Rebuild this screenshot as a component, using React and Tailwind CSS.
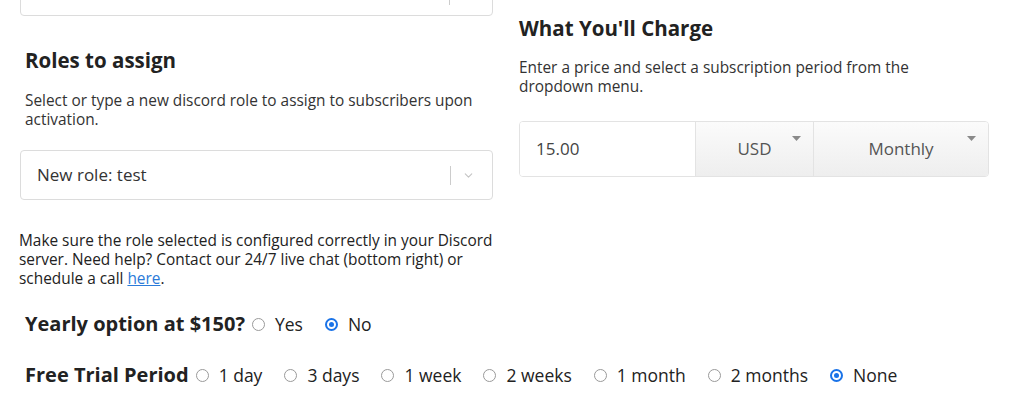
import { ChevronDown } from 'lucide-react';

const Radio = ({ checked }) => (
  <span
    className={`inline-flex h-[13px] w-[13px] shrink-0 items-center justify-center rounded-full border ${
      checked ? 'border-[#1a73e8] border-2' : 'border-[#9a9a9a]'
    }`}
  >
    {checked && <span className="h-[5px] w-[5px] rounded-full bg-[#1a73e8]" />}
  </span>
);

const RadioGroup = ({ label, options, value }) => (
  <div className="flex h-[28px] items-center">
    <span className="text-[20px] font-bold leading-[28px] text-[#222]">{label}</span>
    {options.map((opt, i) => (
      <label key={opt} className={`flex items-center ${i === 0 ? 'ml-[7px]' : 'ml-[22px]'}`}>
        <Radio checked={opt === value} />
        <span className="ml-[10px] text-[17.5px] leading-[28px] text-[#222]">{opt}</span>
      </label>
    ))}
  </div>
);

const Caret = () => (
  <svg width="9" height="5" viewBox="0 0 9 5" className="absolute right-[12px] top-[14px]">
    <path d="M0 0h9L4.5 5z" fill="#8a8a8a" />
  </svg>
);

export default function App() {
  return (
    <div className="h-[406px] w-[1024px] overflow-hidden bg-white font-['Open_Sans',sans-serif] text-[#222]">
      <div className="grid grid-cols-[474px_470px] gap-x-[26px] pl-[19px]">
        {/* left column */}
        <div>
          {/* previous field, scrolled off the top */}
          <div className="relative ml-[1px] -mt-[40px] h-[56px] rounded-[4px] border border-[#dcdcdc]">
            <span className="absolute right-[42px] top-[24px] h-[20px] w-px bg-[#ccc]" />
          </div>

          <h2 className="ml-[6px] mt-[30px] text-[20.5px] font-bold leading-[28px]">Roles to assign</h2>
          <p className="ml-[6px] mt-[17px] text-[15.4px] leading-[19px] text-[#333]">
            Select or type a new discord role to assign to subscribers upon activation.
          </p>

          <div className="ml-[1px] mt-[21px] flex h-[50px] items-center rounded-[4px] border border-[#dcdcdc] pl-[16px] pr-[17px]">
            <span className="flex-1 text-[17px] text-[#333]">New role: test</span>
            <span className="h-[19px] w-px bg-[#ccc]" />
            <ChevronDown className="ml-[11px] h-[13px] w-[13px] text-[#c4c4c4]" strokeWidth={2} />
          </div>

          <p className="mt-[31px] text-[15.4px] leading-[19px] text-[#222]">
            Make sure the role selected is configured correctly in your Discord server. Need help?
            Contact our 24/7 live chat (bottom right) or schedule a call{' '}
            <a href="#" className="text-[#2b7bd9] underline">
              here
            </a>
            .
          </p>
        </div>

        {/* right column */}
        <div>
          <h2 className="mt-[14px] text-[20.5px] font-bold leading-[28px]">What You'll Charge</h2>
          <p className="mt-[16px] pr-[60px] text-[15.4px] leading-[19px] text-[#333]">
            Enter a price and select a subscription period from the dropdown menu.
          </p>
          <div className="mt-[25px] flex h-[56px] overflow-hidden rounded-[4px] border border-[#e3e3e3]">
            <div className="flex w-[175px] items-center bg-white pl-[16px] text-[17px] text-[#444]">15.00</div>
            <div className="relative flex w-[118px] items-center justify-center border-l border-[#e3e3e3] bg-gradient-to-b from-[#fbfbfb] to-[#eeeeee] text-[17px] text-[#555]">
              USD
              <Caret />
            </div>
            <div className="relative flex flex-1 items-center justify-center border-l border-[#e3e3e3] bg-gradient-to-b from-[#fbfbfb] to-[#eeeeee] text-[17px] text-[#555]">
              Monthly
              <Caret />
            </div>
          </div>
        </div>
      </div>

      <div className="mt-[22px] pl-[25px]">
        <RadioGroup label="Yearly option at $150?" options={['Yes', 'No']} value="No" />
        <div className="mt-[23px]">
          <RadioGroup
            label="Free Trial Period"
            options={['1 day', '3 days', '1 week', '2 weeks', '1 month', '2 months', 'None']}
            value="None"
          />
        </div>
      </div>
    </div>
  );
}
